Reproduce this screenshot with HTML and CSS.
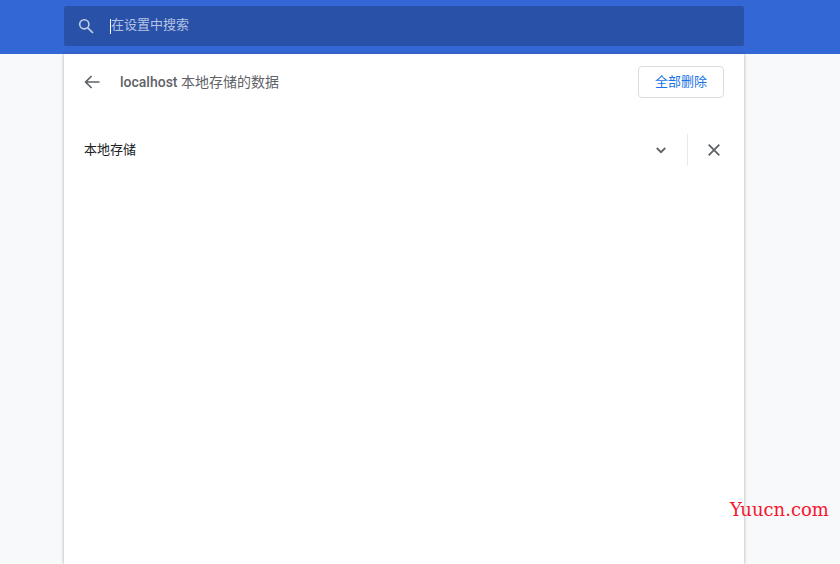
FILE: index.html
```html
<!DOCTYPE html>
<html lang="zh-CN">
<head>
<meta charset="utf-8">
<title>设置</title>
<link rel="stylesheet" href="styles.css">
</head>
<body>
<header class="topbar">
  <div class="search">
    <svg class="search-icon" width="16" height="16" viewBox="0 0 16 16"><circle cx="6.3" cy="6.3" r="4.6" fill="none" stroke="currentColor" stroke-width="1.6"/><path d="M9.8 9.8 15 15" fill="none" stroke="currentColor" stroke-width="1.7"/></svg>
    <span class="caret"></span>
    <span class="placeholder">在设置中搜索</span>
  </div>
</header>
<main class="page">
  <section class="card">
    <div class="subpage-head">
      <svg class="back" width="16" height="14" viewBox="0 0 16 14"><path d="M15.5 7H1.8M7.6 1 1.6 7l6 6" fill="none" stroke="currentColor" stroke-width="1.7"/></svg>
      <h1 class="title"><span class="host">localhost</span> 本地存储的数据</h1>
      <button class="remove-all"><span class="remove-text">全部删除</span></button>
    </div>
    <div class="row">
      <span class="row-label">本地存储</span>
      <svg class="chevron" width="10" height="7" viewBox="0 0 10 7"><path d="M.8 1 5 5.2 9.2 1" fill="none" stroke="currentColor" stroke-width="1.8"/></svg>
      <span class="divider"></span>
      <svg class="close" width="12" height="12" viewBox="0 0 12 12"><path d="M.7.7l10.6 10.6M11.3.7.7 11.3" fill="none" stroke="currentColor" stroke-width="1.8"/></svg>
    </div>
  </section>
</main>
<div class="watermark">Yuucn.com</div>
</body>
</html>
```
FILE: styles.css
```css
* { box-sizing: border-box; }
html, body { margin: 0; height: 100%; overflow: hidden; }
body {
  position: relative;
  background: #f8f9fa;
  font-family: Roboto, "Noto Sans CJK SC", sans-serif;
  font-size: 13px;
  color: #333;
}
.topbar {
  height: 54px;
  padding: 6px 96px 8px 64px;
  background: #3367d6;
}
.search {
  display: flex;
  align-items: center;
  height: 40px;
  padding-left: 14px;
  background: #2a51a8;
  border-radius: 2px;
  color: #c3cfe8;
}
.search-icon { flex: none; }
.caret {
  flex: none;
  width: 1px;
  height: 15px;
  margin-left: 16px;
  background: #fff;
}
.placeholder { padding-bottom: 6px; font-size: 13px; color: #b4c3e4; }
.page { display: flex; padding-left: 64px; }
.card {
  width: 680px;
  height: 510px;
  background: #fff;
  box-shadow: 0 0 3px 0 rgba(60, 64, 67, .45);
}
.subpage-head {
  display: flex;
  align-items: center;
  height: 56px;
  padding: 0 20px;
}
.back { flex: none; color: #5f6368; }
.title {
  flex: 1;
  margin: 0 0 0 20px;
  padding-bottom: 2px;
  font-size: 14px;
  font-weight: 400;
  color: #5f6368;
}
.host { font-weight: 500; }
.remove-all {
  width: 86px;
  height: 32px;
  padding: 0;
  background: #fff;
  border: 1px solid #dadce0;
  border-radius: 4px;
  font: inherit;
  color: #1a73e8;
}
.remove-text { position: relative; top: -2px; }
.row {
  display: flex;
  align-items: center;
  height: 32px;
  margin-top: 24px;
  padding-left: 20px;
}
.row-label { flex: 1; padding-bottom: 4px; color: #202124; }
.chevron { flex: none; color: #5f6368; }
.divider {
  flex: none;
  width: 1px;
  height: 32px;
  margin-left: 21px;
  background: #e8eaed;
}
.close { flex: none; margin: 0 24px 0 20px; color: #5f6368; }
.watermark {
  position: absolute;
  left: 730px;
  top: 499px;
  font-family: "DejaVu Serif", serif;
  font-size: 18px;
  color: #f5172f;
}
```
